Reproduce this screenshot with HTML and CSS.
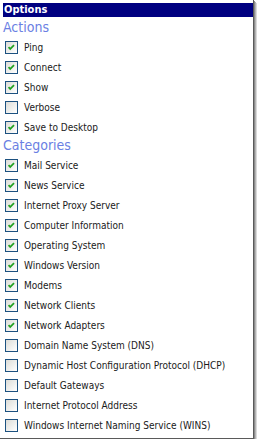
FILE: index.html
```html
<!DOCTYPE html>
<html lang="en">
<head>
    <meta charset="UTF-8">
    <title>Options</title>
    <link rel="stylesheet" href="styles.css">
</head>
<body>

<div class="shot">
    <div class="title">Options</div>

    <div class="group">Actions</div>
    <ul class="list">
        <li><span class="box on"><svg viewBox="0 0 13 13"><path d="M3 6l2 2.2L9.5 3.8"/></svg></span>Ping</li>
        <li><span class="box on"><svg viewBox="0 0 13 13"><path d="M3 6l2 2.2L9.5 3.8"/></svg></span>Connect</li>
        <li><span class="box on"><svg viewBox="0 0 13 13"><path d="M3 6l2 2.2L9.5 3.8"/></svg></span>Show</li>
        <li><span class="box"></span>Verbose</li>
        <li><span class="box on"><svg viewBox="0 0 13 13"><path d="M3 6l2 2.2L9.5 3.8"/></svg></span>Save to Desktop</li>
    </ul>

    <div class="group cat">Categories</div>
    <ul class="list">
        <li><span class="box on"><svg viewBox="0 0 13 13"><path d="M3 6l2 2.2L9.5 3.8"/></svg></span>Mail Service</li>
        <li><span class="box on"><svg viewBox="0 0 13 13"><path d="M3 6l2 2.2L9.5 3.8"/></svg></span>News Service</li>
        <li><span class="box on"><svg viewBox="0 0 13 13"><path d="M3 6l2 2.2L9.5 3.8"/></svg></span>Internet Proxy Server</li>
        <li><span class="box on"><svg viewBox="0 0 13 13"><path d="M3 6l2 2.2L9.5 3.8"/></svg></span>Computer Information</li>
        <li><span class="box on"><svg viewBox="0 0 13 13"><path d="M3 6l2 2.2L9.5 3.8"/></svg></span>Operating System</li>
        <li><span class="box on"><svg viewBox="0 0 13 13"><path d="M3 6l2 2.2L9.5 3.8"/></svg></span>Windows Version</li>
        <li><span class="box on"><svg viewBox="0 0 13 13"><path d="M3 6l2 2.2L9.5 3.8"/></svg></span>Modems</li>
        <li><span class="box on"><svg viewBox="0 0 13 13"><path d="M3 6l2 2.2L9.5 3.8"/></svg></span>Network Clients</li>
        <li><span class="box on"><svg viewBox="0 0 13 13"><path d="M3 6l2 2.2L9.5 3.8"/></svg></span>Network Adapters</li>
        <li><span class="box"></span>Domain Name System (DNS)</li>
        <li><span class="box"></span>Dynamic Host Configuration Protocol (DHCP)</li>
        <li><span class="box"></span>Default Gateways</li>
        <li><span class="box"></span>Internet Protocol Address</li>
        <li><span class="box"></span>Windows Internet Naming Service (WINS)</li>
    </ul>
</div>

</body>
</html>
```

FILE: styles.css
```css
*{
    margin: 0;
    padding: 0;
    box-sizing: border-box;
}
body{
    background-color: #fff;
    font-family: "DejaVu Sans Condensed", "DejaVu Sans", sans-serif;
    font-size: 10px;
    color: #1a1a1a;
}
.shot{
    width: 254px;
    height: 439px;
    padding: 3px 0 0 3px;
    background-color: #fff;
    border-right: 1px solid #5a5a5a;
    border-bottom: 1px solid #5a5a5a;
    box-shadow: 1px 1px 0 #8c8c8c, 2px 2px 0 #b4b4b4, 3px 3px 0 #dadada;
}
.title{
    height: 14px;
    line-height: 14px;
    padding-left: 1px;
    background-color: #000080;
    color: #fff;
    font-size: 11px;
    font-weight: bold;
}
.group{
    height: 20px;
    line-height: 21px;
    font-size: 14px;
    color: #6b7fe3;
}
.group.cat{
    height: 18px;
    line-height: 17px;
}
.list{
    list-style: none;
}
.list li{
    height: 20px;
    display: flex;
    align-items: center;
    gap: 6px;
    padding-left: 2px;
}
.box{
    width: 13px;
    height: 13px;
    flex: none;
    border: 1px solid #1c5180;
    background: linear-gradient(135deg, #dcdcd7, #fff);
}
.box svg{
    display: block;
    width: 11px;
    height: 11px;
}
.box svg path{
    fill: none;
    stroke: #21a121;
    stroke-width: 2;
}
```
